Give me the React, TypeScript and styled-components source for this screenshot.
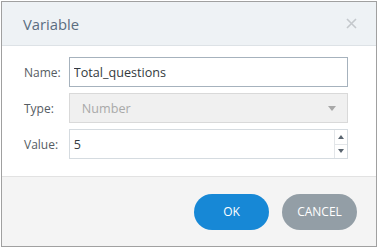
import React from "react";
import styled, { createGlobalStyle } from "styled-components";

const Global = createGlobalStyle`
  html, body { margin: 0; padding: 0; background: #ffffff; }
  body { font-family: "Open Sans", "Segoe UI", "Noto Sans", sans-serif; }
  * { box-sizing: border-box; }
`;

const Page = styled.div`
  width: 378px;
  height: 248px;
  padding: 1px;
`;

const Dialog = styled.div`
  width: 376px;
  height: 246px;
  border: 1px solid #a0a0a0;
  display: flex;
  flex-direction: column;
  background: #ffffff;
`;

const Header = styled.div`
  height: 44px;
  background: #eef2f5;
  border-bottom: 1px solid #dde2e6;
  display: flex;
  align-items: center;
  justify-content: space-between;
  padding: 0 19px 0 21px;
`;

const Title = styled.div`
  font-size: 14.8px;
  color: #5b6d80;
`;

const Close = styled.button`
  border: none;
  background: transparent;
  padding: 0;
  width: 11px;
  height: 11px;
  display: flex;
  align-items: center;
  justify-content: center;
  cursor: pointer;
`;

const Body = styled.div`
  height: 130px;
  padding: 11px 28px 0 22px;
  display: flex;
  flex-direction: column;
  gap: 6px;
`;

const Row = styled.div`
  display: flex;
  align-items: center;
  height: 30px;
`;

const Label = styled.label`
  width: 45px;
  font-size: 12px;
  color: #555c63;
`;

const TextInput = styled.input<{ $focused?: boolean }>`
  width: 280px;
  height: 30px;
  border: 1px solid ${(p) => (p.$focused ? "#a6b2bd" : "#d5dbe0")};
  padding: 0 4px;
  font-family: inherit;
  font-size: 12.6px;
  color: #333a40;
  outline: none;
  background: #fff;
`;

const Select = styled.div`
  width: 280px;
  height: 30px;
  border: 1px solid #d9d9d9;
  background: #f0f0f0;
  display: flex;
  align-items: center;
  justify-content: space-between;
  padding: 0 11px 0 12px;
  font-size: 12.6px;
  color: #a9a9a9;
`;

const Caret = styled.span`
  width: 0;
  height: 0;
  border-left: 4px solid transparent;
  border-right: 4px solid transparent;
  border-top: 5px solid #a8a8a8;
`;

const NumberBox = styled.div`
  width: 280px;
  height: 30px;
  border: 1px solid #d5dbe0;
  display: flex;
`;

const NumberField = styled.input`
  flex: 1;
  min-width: 0;
  border: none;
  outline: none;
  padding: 0 4px;
  font-family: inherit;
  font-size: 12.6px;
  color: #333a40;
  background: #fff;
`;

const Spinner = styled.div`
  width: 13px;
  border-left: 1px solid #e3e6e9;
  display: flex;
  flex-direction: column;
`;

const SpinBtn = styled.div<{ $down?: boolean }>`
  flex: 1;
  display: flex;
  align-items: center;
  justify-content: center;
  border-top: ${(p) => (p.$down ? "1px solid #e3e6e9" : "none")};
  &::after {
    content: "";
    width: 0;
    height: 0;
    border-left: 3px solid transparent;
    border-right: 3px solid transparent;
    ${(p) =>
      p.$down
        ? "border-top: 4px solid #5a6570;"
        : "border-bottom: 4px solid #5a6570;"}
  }
`;

const Footer = styled.div`
  flex: 1;
  background: #f4f4f4;
  border-top: 1px solid #e2e2e2;
  display: flex;
  justify-content: flex-end;
  align-items: center;
  gap: 13px;
  padding: 0 19px 0 0;
`;

const Button = styled.button<{ $variant: "primary" | "secondary" }>`
  width: 75px;
  height: 36px;
  border: none;
  border-radius: 18px;
  background: ${(p) => (p.$variant === "primary" ? "#1788d6" : "#939ea6")};
  color: #ffffff;
  font-family: inherit;
  font-size: 12px;
  cursor: pointer;
  padding: 0;
`;

export default function App() {
  return (
    <>
      <Global />
      <Page>
        <Dialog>
          <Header>
            <Title>Variable</Title>
            <Close aria-label="close">
              <svg width="11" height="11" viewBox="0 0 11 11">
                <path d="M1 1L10 10M10 1L1 10" stroke="#c4c8cc" strokeWidth="1.6" />
              </svg>
            </Close>
          </Header>
          <Body>
            <Row>
              <Label>Name:</Label>
              <TextInput $focused defaultValue="Total_questions" />
            </Row>
            <Row>
              <Label>Type:</Label>
              <Select>
                <span>Number</span>
                <Caret />
              </Select>
            </Row>
            <Row>
              <Label>Value:</Label>
              <NumberBox>
                <NumberField defaultValue="5" />
                <Spinner>
                  <SpinBtn />
                  <SpinBtn $down />
                </Spinner>
              </NumberBox>
            </Row>
          </Body>
          <Footer>
            <Button $variant="primary">OK</Button>
            <Button $variant="secondary">CANCEL</Button>
          </Footer>
        </Dialog>
      </Page>
    </>
  );
}
